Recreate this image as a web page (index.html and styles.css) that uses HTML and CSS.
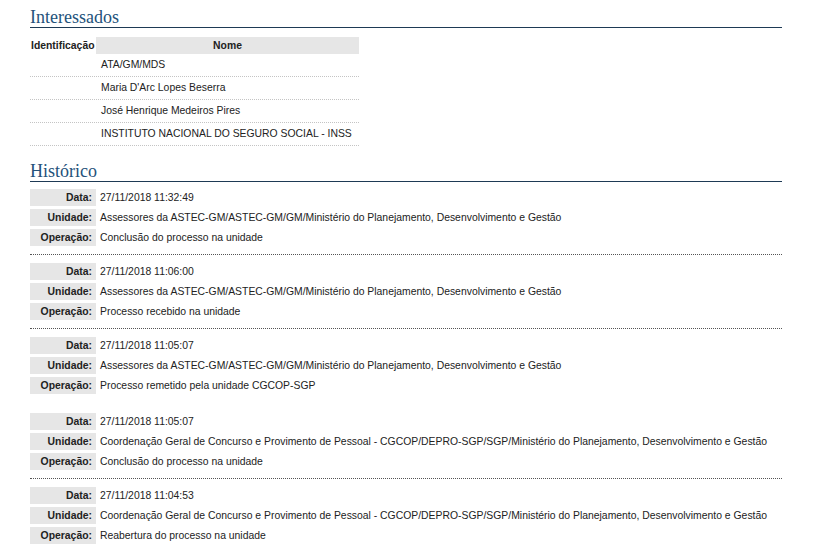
FILE: index.html
```html
<!DOCTYPE html>
<html lang="pt-BR">
<head>
<meta charset="utf-8">
<title>Processo</title>
<link rel="stylesheet" href="styles.css">
</head>
<body>
<div class="page">
  <h2 class="section-title first">Interessados</h2>
  <div class="interessados">
    <div class="ih ih-id">Identificação</div>
    <div class="ih ih-nome">Nome</div>
    <div class="irow"><div class="icell"></div><div class="icell name">ATA/GM/MDS</div></div>
    <div class="irow"><div class="icell"></div><div class="icell name">Maria D'Arc Lopes Beserra</div></div>
    <div class="irow"><div class="icell"></div><div class="icell name">José Henrique Medeiros Pires</div></div>
    <div class="irow"><div class="icell"></div><div class="icell name">INSTITUTO NACIONAL DO SEGURO SOCIAL - INSS</div></div>
  </div>

  <h2 class="section-title second">Histórico</h2>
  <div class="historico">
    <div class="hgroup">
      <div class="lbl">Data:</div><div class="val">27/11/2018 11:32:49</div>
      <div class="lbl">Unidade:</div><div class="val">Assessores da ASTEC-GM/ASTEC-GM/GM/Ministério do Planejamento, Desenvolvimento e Gestão</div>
      <div class="lbl">Operação:</div><div class="val">Conclusão do processo na unidade</div>
    </div>
    <div class="hgroup">
      <div class="lbl">Data:</div><div class="val">27/11/2018 11:06:00</div>
      <div class="lbl">Unidade:</div><div class="val">Assessores da ASTEC-GM/ASTEC-GM/GM/Ministério do Planejamento, Desenvolvimento e Gestão</div>
      <div class="lbl">Operação:</div><div class="val">Processo recebido na unidade</div>
    </div>
    <div class="hgroup no-sep">
      <div class="lbl">Data:</div><div class="val">27/11/2018 11:05:07</div>
      <div class="lbl">Unidade:</div><div class="val">Assessores da ASTEC-GM/ASTEC-GM/GM/Ministério do Planejamento, Desenvolvimento e Gestão</div>
      <div class="lbl">Operação:</div><div class="val">Processo remetido pela unidade CGCOP-SGP</div>
    </div>
    <div class="hgroup">
      <div class="lbl">Data:</div><div class="val">27/11/2018 11:05:07</div>
      <div class="lbl">Unidade:</div><div class="val">Coordenação Geral de Concurso e Provimento de Pessoal - CGCOP/DEPRO-SGP/SGP/Ministério do Planejamento, Desenvolvimento e Gestão</div>
      <div class="lbl">Operação:</div><div class="val">Conclusão do processo na unidade</div>
    </div>
    <div class="hgroup">
      <div class="lbl">Data:</div><div class="val">27/11/2018 11:04:53</div>
      <div class="lbl">Unidade:</div><div class="val">Coordenação Geral de Concurso e Provimento de Pessoal - CGCOP/DEPRO-SGP/SGP/Ministério do Planejamento, Desenvolvimento e Gestão</div>
      <div class="lbl">Operação:</div><div class="val">Reabertura do processo na unidade</div>
    </div>
  </div>
</div>
</body>
</html>
```

FILE: styles.css
```css
html, body {
  margin: 0;
  padding: 0;
  background: #ffffff;
}

body {
  font-family: "Liberation Sans", Arial, sans-serif;
  font-size: 10.4px;
  color: #222222;
}

.page {
  width: 752px;
  padding-left: 30px;
}

.section-title {
  font-family: "Liberation Serif", "Times New Roman", serif;
  font-weight: normal;
  font-size: 18px;
  line-height: 20px;
  color: #24527a;
  margin: 0;
  border-bottom: 1px solid #1e3a55;
}

.section-title.first {
  padding-top: 7px;
}

.section-title.second {
  margin-top: 15px;
}

.interessados {
  margin-top: 9px;
  width: 329px;
  display: grid;
  grid-template-columns: 66px 1fr;
}

.ih {
  height: 17px;
  line-height: 17px;
  font-weight: bold;
  color: #222222;
}

.ih-id {
  background: #ffffff;
  padding-left: 1px;
}

.ih-nome {
  background: #e6e6e6;
  text-align: center;
}

.irow {
  grid-column: 1 / 3;
  display: grid;
  grid-template-columns: 66px 1fr;
  height: 22px;
  border-bottom: 1px dotted #c4c4c4;
}

.icell {
  line-height: 22px;
}

.icell.name {
  padding-left: 5px;
}

.historico {
  margin-top: 7px;
}

.hgroup {
  display: grid;
  grid-template-columns: 66px 1fr;
  column-gap: 4px;
  row-gap: 3px;
  padding-bottom: 8px;
  margin-bottom: 8px;
  border-bottom: 1px dotted #555555;
}

.hgroup.no-sep {
  border-bottom-color: transparent;
  margin-bottom: 10px;
}

.lbl {
  background: #e6e6e6;
  height: 17px;
  line-height: 17px;
  text-align: right;
  padding-right: 4px;
  font-weight: bold;
}

.val {
  height: 17px;
  line-height: 17px;
  white-space: nowrap;
}
```
